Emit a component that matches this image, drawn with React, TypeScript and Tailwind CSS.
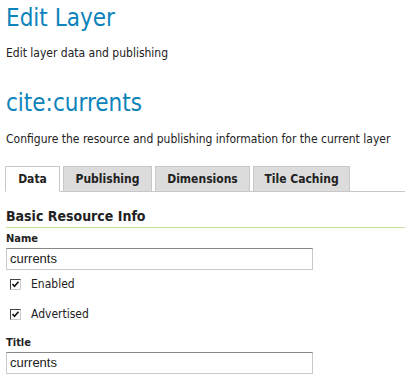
import { useState } from "react";

const tabs = [
  { name: "Data", w: "w-[55px]" },
  { name: "Publishing", w: "w-[89px]" },
  { name: "Dimensions", w: "w-[95px]" },
  { name: "Tile Caching", w: "w-[97px]" },
];

function Check({ label }: { label: string }) {
  return (
    <label className="flex items-center h-[30px] pl-[4px]">
      <span className="relative w-[11px] h-[11px] border border-t-[#444] border-l-[#444] border-r-[#ccc] border-b-[#ccc] bg-white">
        <svg viewBox="0 0 9 9" className="absolute left-0 top-0 w-[9px] h-[9px]">
          <path d="M1.5 4 L3.5 6.2 L7.5 1.8" stroke="#111" strokeWidth="1.6" fill="none" />
        </svg>
      </span>
      <span className="ml-[10px] text-[12px] text-[#222]">{label}</span>
    </label>
  );
}

function Field({ label, value }: { label: string; value: string }) {
  return (
    <div>
      <div className="text-[11px] font-bold text-[#222] leading-[14px]">{label}</div>
      <input
        readOnly
        value={value}
        className="mt-[1px] w-[307px] h-[22px] px-[3px] border border-[#c8c8c8] border-t-[#888] text-[13px] text-[#222] outline-none"
        style={{ fontFamily: "'Liberation Sans', Arial, sans-serif" }}
      />
    </div>
  );
}

export default function App() {
  const [active] = useState(0);
  return (
    <div
      className="bg-white w-[405px] h-[377px] overflow-hidden px-[6px] pt-[2px] text-[#222]"
      style={{ fontFamily: "'DejaVu Sans Condensed', 'DejaVu Sans', Verdana, sans-serif" }}
    >
      <h1 className="text-[24px] leading-[32px] text-[#0c83ba]">Edit Layer</h1>
      <p className="text-[12px] mt-[12px] leading-[14px]">Edit layer data and publishing</p>
      <h2 className="text-[24px] leading-[32px] text-[#0c83ba] mt-[27px]">cite:currents</h2>
      <p className="text-[12px] mt-[13px] leading-[14px]">Configure the resource and publishing information for the current layer</p>

      <div className="flex mt-[20px] -ml-[1px] -mr-[6px] border-b border-[#c8c8c8] h-[26px]">
        {tabs.map((t, i) => (
          <div
            key={t.name}
            className={
              i === active
                ? `${t.w} h-[26px] flex items-center justify-center text-[12px] font-bold text-[#222] bg-white border border-[#c8c8c8] border-b-white mr-[3px]`
                : `${t.w} h-[25px] flex items-center justify-center text-[12px] font-bold text-[#222] bg-[#dcdcdc] border border-[#c8c8c8] border-b-0 mr-[3px]`
            }
          >
            {t.name}
          </div>
        ))}
      </div>

      <h3 className="mt-[15px] text-[14px] font-bold leading-[18px] -mr-[6px] pb-[2px] border-b border-[#c5dd9a]">Basic Resource Info</h3>
      <div className="mt-[4px]">
        <Field label="Name" value="currents" />
        <div className="-mt-[1px]">
          <Check label="Enabled" />
          <Check label="Advertised" />
        </div>
        <div className="mt-[7px]">
          <Field label="Title" value="currents" />
        </div>
      </div>
    </div>
  );
}
